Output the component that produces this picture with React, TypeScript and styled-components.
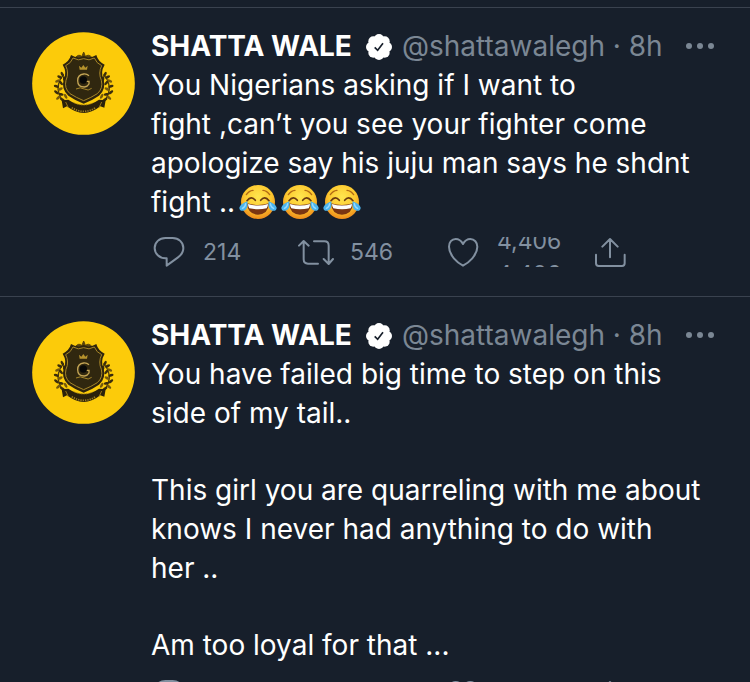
import React from 'react';
import styled, { createGlobalStyle } from 'styled-components';

const GlobalStyle = createGlobalStyle`
  *, *::before, *::after { box-sizing: border-box; }
  body {
    margin: 0;
    background: #171f2b;
    color: #fff;
    font-family: Inter, Roboto, sans-serif;
  }
`;

const Timeline = styled.main`
  height: 100vh;
  overflow: hidden;
  padding-top: 7px;
`;

const Tweet = styled.article`
  display: flex;
  gap: 16px;
  padding: 19px 34px 28px 32px;
  border-top: 1px solid #3a424f;
`;

const AvatarLink = styled.a`
  flex: none;
  width: 103px;
  height: 103px;
  margin-top: 5px;
`;

const Drawing = styled.svg`
  display: block;
  width: 100%;
  height: 100%;
`;

const Content = styled.div`
  flex: 1;
  min-width: 0;
`;

const Header = styled.header`
  display: flex;
  align-items: center;
  height: 39px;
  font-size: 28px;
  line-height: 39px;
  white-space: nowrap;
`;

const Name = styled.a`
  color: #fff;
  font-weight: 700;
  text-decoration: none;
`;

const BadgeIcon = styled.svg`
  flex: none;
  width: 26px;
  height: 26px;
  margin: 0 10px 0 14px;
`;

const Meta = styled.span`
  color: #7b8794;
`;

const Handle = styled.a`
  color: inherit;
  text-decoration: none;
`;

const MoreButton = styled.button`
  width: 32px;
  height: 24px;
  margin-left: auto;
  padding: 0;
  border: 0;
  background: none;
  color: #7b8794;
`;

const Body = styled.div`
  display: flex;
  flex-direction: column;
  gap: 38px;
  font-size: 28px;
  line-height: 39px;
`;

const Paragraph = styled.p`
  margin: 0;
  white-space: pre-line;
`;

const EmojiIcon = styled.svg`
  width: 38px;
  height: 36px;
  margin-left: 4px;
  vertical-align: -8px;
`;

const Actions = styled.footer`
  display: grid;
  grid-template-columns: repeat(3, 147px) auto;
  justify-content: start;
  height: 32px;
  margin-top: 14px;
`;

const ActionButton = styled.button`
  display: flex;
  align-items: center;
  gap: 16px;
  height: 32px;
  padding: 0;
  border: 0;
  background: none;
  color: #8290a0;
  font: 400 23px/34px Inter, Roboto, sans-serif;
  text-align: left;
`;

const ActionIcon = styled.svg`
  flex: none;
  width: 36px;
  height: 32px;
  fill: none;
  stroke: currentColor;
  stroke-width: 6;
  stroke-linecap: round;
  stroke-linejoin: round;
`;

const Ticker = styled.span`
  display: block;
  height: 30px;
  overflow: hidden;
`;

const TickerValue = styled.span<{ $leaving?: boolean }>`
  display: block;
  height: 33px;
  margin-top: ${(p) => (p.$leaving ? '-13px' : '0')};
`;

const leaves = [
  [104, 156, 30], [98, 168, -20], [108, 174, 50], [94, 184, 20], [106, 192, -30],
  [94, 202, 40], [108, 208, 10], [100, 218, -40], [112, 224, 30], [118, 162, 80],
  [122, 214, 60], [112, 148, 60],
];

function Laurel() {
  return (
    <g>
      <path d="M116 148 Q92 178 102 206 Q108 226 124 234" fill="none" stroke="#4c3b0b" strokeWidth="4" />
      {leaves.map(([x, y, r], i) => (
        <ellipse key={i} cx={x} cy={y} rx="8" ry="4" fill={i % 3 === 1 ? '#75590c' : '#3a2c0c'} transform={`rotate(${r} ${x} ${y})`} />
      ))}
    </g>
  );
}

function Crest() {
  return (
    <Drawing viewBox="21 21 309 309" aria-hidden="true">
      <circle cx="175.5" cy="175.5" r="154" fill="#fccb0a" />
      <Laurel />
      <g transform="translate(352 0) scale(-1 1)"><Laurel /></g>
      <path d="M176 81 L182 96 H170Z M150 99 Q162 84 172 96 M202 99 Q190 84 180 96" fill="#584309" stroke="#584309" strokeWidth="3" />
      <path d="M176 93 Q158 102 138 90 Q133 109 113 119 Q127 142 116 164 Q108 192 130 212 Q150 226 176 236 Q202 226 222 212 Q244 192 236 164 Q225 142 239 119 Q219 109 214 90 Q194 102 176 93Z" fill="#2e240d" />
      <path d="M176 101 Q160 109 144 99 Q138 115 122 122 Q133 144 123 166 Q117 190 135 206 Q154 218 176 227 Q198 218 217 206 Q235 190 229 166 Q219 144 230 122 Q214 115 208 99 Q192 109 176 101Z" fill="#30270f" stroke="#a58529" strokeWidth="3" />
      <path d="M164 134 L162 122 L169 128 L175 120 L181 128 L188 122 L186 134Z" fill="#b5922c" />
      <path d="M192 152 Q185 146 176 147 Q158 149 158 167 Q158 186 178 186 Q188 185 192 177 V169 H180" fill="none" stroke="#c4a555" strokeWidth="4" />
      <circle cx="175" cy="165" r="11" fill="#080908" />
      <path d="M153 192 Q166 185 178 192 T200 190" fill="none" stroke="#a58529" strokeWidth="3" />
      <path d="M110 226 L130 224 Q176 256 222 224 L242 226 L238 248 L226 244 Q176 284 126 244 L114 250Z" fill="#2b210b" />
      <path d="M122 231 L130 248 M230 231 L222 248" stroke="#9a7715" strokeWidth="3" />
      <path d="M140 248 Q176 270 212 248" fill="none" stroke="#9a7c24" strokeWidth="5" strokeDasharray="4 3" />
      <path d="M148 234 Q176 246 204 234" fill="none" stroke="#a07c10" strokeWidth="3" strokeDasharray="4 3" />
    </Drawing>
  );
}

function VerifiedBadge() {
  return (
    <BadgeIcon viewBox="678 36 78 78" role="img" aria-label="Verified account">
      <g fill="#fff">
        <circle cx="717" cy="75" r="33" />
        {[0, 45, 90, 135, 180, 225, 270, 315].map((a) => (
          <circle key={a} cx="717" cy="51" r="15" transform={`rotate(${a} 717 75)`} />
        ))}
      </g>
      <path d="M704 76 L713 85 L729 64" fill="none" stroke="#171f2b" strokeWidth="5" />
    </BadgeIcon>
  );
}

function JoyEmoji({ id }: { id: string }) {
  return (
    <EmojiIcon viewBox="0 0 114 108" role="img" aria-label="😂">
      <defs>
        <radialGradient id={id} cx="50%" cy="35%" r="65%">
          <stop offset="0" stopColor="#ffe64f" />
          <stop offset="0.6" stopColor="#fdc92f" />
          <stop offset="1" stopColor="#ee8a1b" />
        </radialGradient>
      </defs>
      <circle cx="57" cy="54" r="51" fill={`url(#${id})`} />
      <path d="M22 32 Q30 20 42 19 M92 32 Q84 20 72 19" fill="none" stroke="#b26a14" strokeWidth="4" strokeLinecap="round" />
      <path d="M24 50 Q37 34 49 49 M65 49 Q77 34 90 50" fill="none" stroke="#6b3a10" strokeWidth="5" strokeLinecap="round" />
      <path d="M24 58 Q57 68 90 58 Q88 91 57 92 Q26 91 24 58Z" fill="#7a3512" />
      <path d="M27 60 Q57 69 87 60 Q87 68 83 73 Q57 79 31 73 Q27 68 27 60Z" fill="#fff" />
      <path d="M25 52 Q28 76 14 80 Q1 82 1 71 Q3 61 25 52Z M89 52 Q86 76 100 80 Q113 82 113 71 Q111 61 89 52Z" fill="#4bb4ee" />
      <path d="M20 59 Q19 70 10 73 M94 59 Q95 70 104 73" fill="none" stroke="#9bdcff" strokeWidth="4" strokeLinecap="round" />
    </EmojiIcon>
  );
}

function TweetHeader() {
  return (
    <Header>
      <Name href="#profile">SHATTA WALE</Name>
      <VerifiedBadge />
      <Meta>
        <Handle href="#profile">@shattawalegh</Handle> · <time>8h</time>
      </Meta>
      <MoreButton type="button" aria-label="More">
        <Drawing viewBox="0 0 32 24" fill="currentColor" aria-hidden="true">
          <circle cx="5" cy="11" r="3" />
          <circle cx="16" cy="11" r="3" />
          <circle cx="27" cy="11" r="3" />
        </Drawing>
      </MoreButton>
    </Header>
  );
}

interface Counts {
  replies?: string;
  retweets?: string;
  likes?: string[];
}

function TweetActions({ replies, retweets, likes }: Counts) {
  return (
    <Actions>
      <ActionButton type="button" aria-label="Reply">
        <ActionIcon viewBox="33 168 108 96">
          <path d="M80 235 H77 C58 234 44 221 44 204 C44 187 58 174 76 174 H98 C116 174 130 187 130 204 C130 215 124 225 114 232 L80 257Z" />
        </ActionIcon>
        {replies}
      </ActionButton>
      <ActionButton type="button" aria-label="Retweet">
        <ActionIcon viewBox="474 168 108 96">
          <path d="M477 197 L491 183 L506 197 M491 184 V238 Q491 251 504 251 H534 M522 184 H553 Q566 184 566 197 V250 M551 237 L566 252 L579 237" />
        </ActionIcon>
        {retweets}
      </ActionButton>
      <ActionButton type="button" aria-label="Like">
        <ActionIcon viewBox="135 48 108 96">
          <path d="M189 72 C183 61 175 57 167 57 C155 57 147 67 147 80 C147 106 172 128 189 137 C206 128 232 106 232 80 C232 67 223 57 211 57 C203 57 195 61 189 72Z" />
        </ActionIcon>
        {likes && (
          <Ticker>
            {likes.map((value, i) => (
              <TickerValue key={i} $leaving={i === 0}>{value}</TickerValue>
            ))}
          </Ticker>
        )}
      </ActionButton>
      <ActionButton type="button" aria-label="Share">
        <ActionIcon viewBox="576 48 108 96">
          <path d="M588 104 V130 Q588 138 596 138 H666 Q674 138 674 130 V104 M630 112 V57 M607 80 L630 57 L653 80" />
        </ActionIcon>
      </ActionButton>
    </Actions>
  );
}

export default function App() {
  return (
    <>
      <GlobalStyle />
      <Timeline>
        <Tweet>
          <AvatarLink href="#profile" aria-label="SHATTA WALE"><Crest /></AvatarLink>
          <Content>
            <TweetHeader />
            <Body>
              <Paragraph>
                {'You Nigerians asking if I want to\nfight ,can’t you see your fighter come\napologize say his juju man says he shdnt\nfight ..'}
                <JoyEmoji id="joy-1" />
                <JoyEmoji id="joy-2" />
                <JoyEmoji id="joy-3" />
              </Paragraph>
            </Body>
            <TweetActions replies="214" retweets="546" likes={['4,406', '4,406']} />
          </Content>
        </Tweet>
        <Tweet>
          <AvatarLink href="#profile" aria-label="SHATTA WALE"><Crest /></AvatarLink>
          <Content>
            <TweetHeader />
            <Body>
              <Paragraph>{'You have failed big time to step on this\nside of my tail..'}</Paragraph>
              <Paragraph>{'This girl you are quarreling with me about\nknows I never had anything to do with\nher ..'}</Paragraph>
              <Paragraph>Am too loyal for that ...</Paragraph>
            </Body>
            <TweetActions />
          </Content>
        </Tweet>
      </Timeline>
    </>
  );
}
